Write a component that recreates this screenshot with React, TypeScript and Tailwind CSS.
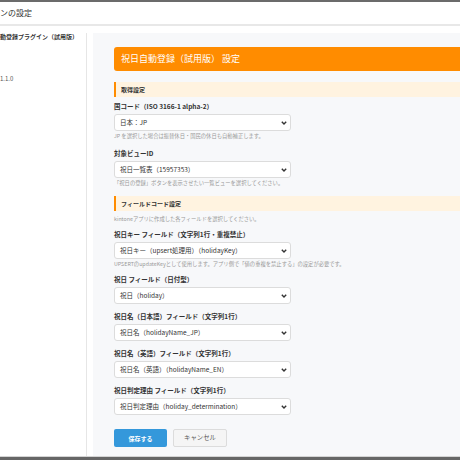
import React from 'react'

const font = "font-['Noto_Sans_CJK_JP','Noto_Sans',sans-serif]"

function Chevron() {
  return (
    <svg width="6" height="4" viewBox="0 0 6 4" className="shrink-0">
      <polyline points="0.8,0.8 3,3 5.2,0.8" fill="none" stroke="#333" strokeWidth="1.4" />
    </svg>
  )
}

function Select({ value }: { value: string }) {
  return (
    <div className="flex h-[17px] w-[177px] items-center justify-between rounded-[3px] border border-[#dcdcdc] bg-white pl-[5px] pr-[3px] text-[6.5px] text-[#333]">
      <span className="whitespace-nowrap">{value}</span>
      <Chevron />
    </div>
  )
}

function Label({ children, className = '' }: { children: React.ReactNode; className?: string }) {
  return (
    <div className={`mb-[3px] whitespace-nowrap text-[6.5px] font-bold leading-[10px] text-[#333] ${className}`}>
      {children}
    </div>
  )
}

function Help({ children, className = '' }: { children: React.ReactNode; className?: string }) {
  return (
    <div className={`whitespace-nowrap text-[5.3px] leading-[7px] text-[#999] ${className}`}>{children}</div>
  )
}

function SectionHead({ children, className = '' }: { children: React.ReactNode; className?: string }) {
  return (
    <div
      className={`flex h-[15px] items-center border-l-2 border-[#ff8c00] bg-[#fff3e0] pl-[5px] text-[6px] font-bold text-[#333] ${className}`}
    >
      {children}
    </div>
  )
}

export default function App() {
  return (
    <div className={`flex h-[460px] w-[460px] flex-col overflow-hidden bg-white ${font}`}>
      <div className="h-[2px] shrink-0 bg-[#6b6b6b]" />
      <header className="flex h-[24px] shrink-0 items-center border-b-2 border-[#e8e8e8] text-[8px] text-[#333]">
        ンの設定
      </header>
      <div className="flex min-h-0 flex-1 pt-[7px]">
        <aside className="w-[87px] shrink-0 border-r border-[#e6e6e6]">
          <div className="whitespace-nowrap text-[6px] font-bold leading-[8px] text-[#333]">
            動登録プラグイン（試用版）
          </div>
          <div className="mt-[34px] text-[6px] leading-[8px] text-[#555]">1.1.0</div>
        </aside>
        <main className="ml-[6px] min-w-0 flex-1 overflow-hidden bg-[#f7f8fa] pl-[21px] pt-[14px]">
          <div className="w-[400px]">
            <div className="flex h-[24px] items-center rounded-l-[3px] bg-[#ff8c00] pl-[7px] text-[9px] text-white">
              祝日自動登録（試用版） 設定
            </div>

            <SectionHead className="mt-[11px]">取得設定</SectionHead>

            <Label className="mt-[4px]">国コード（ISO 3166-1 alpha-2）</Label>
            <Select value="日本：JP" />
            <Help className="mt-[2px]">JP を選択した場合は振替休日・国民の休日も自動補正します。</Help>

            <Label className="mt-[8px]">対象ビューID</Label>
            <Select value="祝日一覧表（15957353）" />
            <Help className="mt-[2px]">「祝日の登録」ボタンを表示させたい一覧ビューを選択してください。</Help>

            <SectionHead className="mt-[9px]">フィールドコード設定</SectionHead>
            <Help className="mt-[5px]">kintoneアプリに作成した各フィールドを選択してください。</Help>

            <Label className="mt-[6px]">祝日キー フィールド（文字列1行・重複禁止）</Label>
            <Select value="祝日キー（upsert処理用）（holidayKey）" />
            <Help className="mt-[2px]">
              UPSERTのupdateKeyとして使用します。アプリ側で「値の重複を禁止する」の設定が必要です。
            </Help>

            <Label className="mt-[6px]">祝日 フィールド（日付型）</Label>
            <Select value="祝日（holiday）" />

            <Label className="mt-[7px]">祝日名（日本語）フィールド（文字列1行）</Label>
            <Select value="祝日名（holidayName_JP）" />

            <Label className="mt-[7px]">祝日名（英語）フィールド（文字列1行）</Label>
            <Select value="祝日名（英語）（holidayName_EN）" />

            <Label className="mt-[7px]">祝日判定理由 フィールド（文字列1行）</Label>
            <Select value="祝日判定理由（holiday_determination）" />

            <div className="mt-[14px] flex gap-[6px]">
              <button className="flex h-[18px] w-[53px] items-center justify-center rounded-[2px] bg-[#3498db] text-[6px] font-bold text-white">
                保存する
              </button>
              <button className="flex h-[18px] w-[54px] items-center justify-center rounded-[2px] border border-[#dcdcdc] bg-[#f5f5f5] text-[6.4px] text-[#555]">
                キャンセル
              </button>
            </div>
          </div>
        </main>
      </div>
      <div className="h-px shrink-0 bg-[#d4d4d4]" />
      <div className="h-[3px] shrink-0 bg-[#666]" />
    </div>
  )
}
